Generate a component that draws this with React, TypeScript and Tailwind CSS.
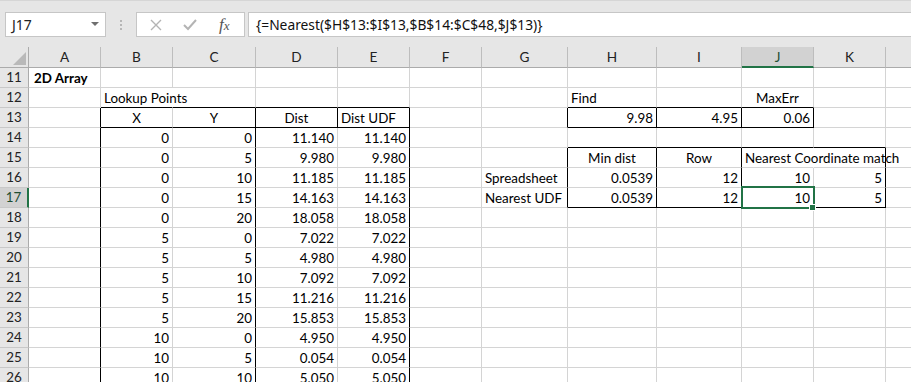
import React from "react";

type Cell = { v: string; a?: "l" | "r" | "c"; b?: boolean };

const COLS = ["A", "B", "C", "D", "E", "F", "G", "H", "I", "J", "K", "L"];
const ROWS = Array.from({ length: 16 }, (_, i) => 11 + i);

const data: Record<string, Cell> = {};
const put = (r: number, c: number, v: string, a?: "l" | "r" | "c", b?: boolean) => {
  data[`${r},${c}`] = { v, a, b };
};

put(11, 0, "2D Array", "l", true);
put(12, 1, "Lookup Points", "l");
put(12, 7, "Find", "l");
put(12, 9, "MaxErr", "c");
put(13, 1, "X", "c");
put(13, 2, "Y", "c");
put(13, 3, "Dist", "c");
put(13, 4, "Dist UDF", "l");
put(13, 7, "9.98");
put(13, 8, "4.95");
put(13, 9, "0.06");
put(15, 7, "Min dist", "c");
put(15, 8, "Row", "c");
put(15, 9, "Nearest Coordinate match", "l");
put(16, 6, "Spreadsheet", "l");
put(16, 7, "0.0539");
put(16, 8, "12");
put(16, 9, "10");
put(16, 10, "5");
put(17, 6, "Nearest UDF", "l");
put(17, 7, "0.0539");
put(17, 8, "12");
put(17, 9, "10");
put(17, 10, "5");

const table: [string, string, string, string][] = [
  ["0", "0", "11.140", "11.140"],
  ["0", "5", "9.980", "9.980"],
  ["0", "10", "11.185", "11.185"],
  ["0", "15", "14.163", "14.163"],
  ["0", "20", "18.058", "18.058"],
  ["5", "0", "7.022", "7.022"],
  ["5", "5", "4.980", "4.980"],
  ["5", "10", "7.092", "7.092"],
  ["5", "15", "11.216", "11.216"],
  ["5", "20", "15.853", "15.853"],
  ["10", "0", "4.950", "4.950"],
  ["10", "5", "0.054", "0.054"],
  ["10", "10", "5.050", "5.050"],
];
table.forEach((row, i) => row.forEach((v, j) => put(14 + i, 1 + j, v)));

function rightKind(r: number, c: number): "hide" | "black" | "gray" {
  if ((r === 12 && c === 1) || (r === 15 && c === 9)) return "hide";
  if (r >= 13 && (c === 0 || c === 2 || c === 4)) return "black";
  if (r === 13 && c === 3) return "black";
  if (r === 13 && c >= 6 && c <= 9) return "black";
  if (r >= 15 && r <= 17 && (c === 6 || c === 7 || c === 8 || c === 10)) return "black";
  return "gray";
}
function bottomBlack(r: number, c: number): boolean {
  if ((r === 12 || r === 13) && c >= 1 && c <= 4) return true;
  if ((r === 12 || r === 13) && c >= 7 && c <= 9) return true;
  if ((r === 14 || r === 17) && c >= 7 && c <= 10) return true;
  return false;
}

function GridCell({ r, c }: { r: number; c: number }) {
  const d = data[`${r},${c}`];
  const rk = rightKind(r, c);
  const rc =
    rk === "black" ? "border-r-black" : rk === "hide" ? "border-r-white" : "border-r-[#d4d4d4]";
  const bc = bottomBlack(r, c) ? "border-b-black" : "border-b-[#d4d4d4]";
  const align =
    d?.a === "l" ? "justify-start" : d?.a === "c" ? "justify-center" : "justify-end";
  const selected = r === 17 && c === 9;
  const indent = r === 11 && c === 0 ? "pl-[5px]" : "";
  return (
    <div
      className={`h-[20px] border-r border-b ${rc} ${bc} flex items-center ${align} px-[3px] ${indent} whitespace-nowrap overflow-visible ${
        selected ? "relative" : ""
      }`}
    >
      {d && (
        <span className={`text-[13.4px] leading-none pt-[2px] text-black ${d.b ? "font-bold" : ""}`}>
          {d.v}
        </span>
      )}
      {selected && (
        <>
          <div className="absolute left-[-1px] top-[-2px] w-[74px] h-[23px] border-2 border-[#217346] pointer-events-none" />
          <div className="absolute right-[-3px] bottom-[-4px] w-[5px] h-[5px] bg-[#217346] border border-white box-content pointer-events-none" />
        </>
      )}
    </div>
  );
}

export default function App() {
  return (
    <div className="w-[911px] h-[382px] overflow-hidden bg-white font-['Lato',sans-serif] text-black">
      {/* Formula bar */}
      <div className="h-[47px] bg-[#e6e6e6] border-t border-t-[#d6d6d6] flex items-start pt-[11px]">
        <div className="ml-[5px] w-[101px] h-[25px] bg-white border border-[#c6c6c6] flex items-center justify-between pl-[6px] pr-[6px]">
          <span className="text-[14px] text-[#222] font-['Noto_Sans',sans-serif] leading-none">J17</span>
          <svg width="8" height="5" viewBox="0 0 8 5">
            <path d="M0 0 L8 0 L4 4 Z" fill="#6f6f6f" />
          </svg>
        </div>
        <div className="ml-[14px] w-[2px] h-[25px] flex flex-col items-center justify-center gap-[2px]">
          <div className="w-[2px] h-[2px] bg-[#b6b6b6]" />
          <div className="w-[2px] h-[2px] bg-[#b6b6b6]" />
          <div className="w-[2px] h-[2px] bg-[#b6b6b6]" />
        </div>
        <div className="ml-[14px] w-[109px] h-[25px] bg-white border border-[#c6c6c6] flex items-center">
          <svg width="12" height="12" viewBox="0 0 12 12" className="ml-[13px]">
            <path d="M1 1 L11 11 M11 1 L1 11" stroke="#b4b4b4" strokeWidth="1.4" />
          </svg>
          <svg width="14" height="12" viewBox="0 0 14 12" className="ml-[21px]">
            <path d="M1 6 L5 10 L13 1" stroke="#b4b4b4" strokeWidth="2" fill="none" />
          </svg>
          <span className="ml-[22px] text-[17px] italic text-[#555] font-['Liberation_Serif',serif] leading-none">
            f<span className="text-[13px]">x</span>
          </span>
        </div>
        <div className="ml-[3px] flex-1 h-[25px] bg-white border border-[#c6c6c6] border-r-0 flex items-center pl-[7px]">
          <span className="text-[13.8px] text-[#111] font-['Noto_Sans',sans-serif] leading-none">
            {"{=Nearest($H$13:$I$13,$B$14:$C$48,$J$13)}"}
          </span>
        </div>
      </div>

      {/* Sheet grid */}
      <div className="w-[1000px] grid grid-cols-[29px_72px_72px_83px_82px_72px_72px_86px_89px_85px_72px_72px_72px]">
        {/* header row */}
        <div className="h-[21px] bg-[#e6e6e6] border-r border-b border-r-[#ababab] border-b-[#ababab] relative">
          <svg width="13" height="13" viewBox="0 0 13 13" className="absolute left-[13px] top-[5px]">
            <path d="M13 0 L13 13 L0 13 Z" fill="#b9b9b9" />
          </svg>
        </div>
        {COLS.map((L) => {
          const sel = L === "J";
          return (
            <div
              key={L}
              className={`h-[21px] flex items-center justify-center border-r border-r-[#bdbdbd] text-[13.6px] leading-none ${
                sel
                  ? "bg-[#d2d2d2] border-b-2 border-b-[#217346] text-[#1e4e33] pt-[2px]"
                  : "bg-[#e6e6e6] border-b border-b-[#ababab] text-[#222] pt-[1px]"
              }`}
            >
              {L === "L" ? "" : L}
            </div>
          );
        })}
        {ROWS.map((r) => (
          <React.Fragment key={r}>
            <div
              className={`h-[20px] flex items-center justify-center text-[13.4px] leading-none pt-[1px] border-b border-b-[#c8c8c8] ${
                r === 17
                  ? "bg-[#d2d2d2] border-r-2 border-r-[#217346] text-[#1e4e33]"
                  : "bg-[#e6e6e6] border-r border-r-[#ababab] text-[#222]"
              }`}
            >
              {r}
            </div>
            {COLS.map((_, c) => (
              <GridCell key={c} r={r} c={c} />
            ))}
          </React.Fragment>
        ))}
      </div>
    </div>
  );
}
